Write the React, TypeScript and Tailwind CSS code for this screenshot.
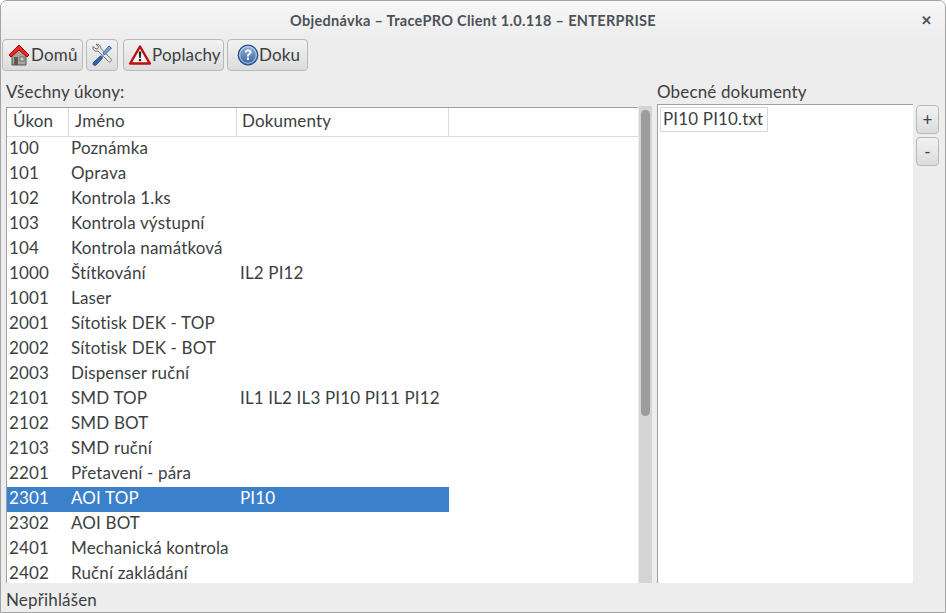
const rows = [
  ["100", "Poznámka", ""],
  ["101", "Oprava", ""],
  ["102", "Kontrola 1.ks", ""],
  ["103", "Kontrola výstupní", ""],
  ["104", "Kontrola namátková", ""],
  ["1000", "Štítkování", "IL2 PI12"],
  ["1001", "Laser", ""],
  ["2001", "Sítotisk DEK - TOP", ""],
  ["2002", "Sítotisk DEK - BOT", ""],
  ["2003", "Dispenser ruční", ""],
  ["2101", "SMD TOP", "IL1 IL2 IL3 PI10 PI11 PI12"],
  ["2102", "SMD BOT", ""],
  ["2103", "SMD ruční", ""],
  ["2201", "Přetavení - pára", ""],
  ["2301", "AOI TOP", "PI10"],
  ["2302", "AOI BOT", ""],
  ["2401", "Mechanická kontrola", ""],
  ["2402", "Ruční zakládání", ""],
];

const toolBtn =
  "h-[32px] flex items-center rounded-[4px] border border-[#b9b9b9] bg-gradient-to-b from-[#f2f2f2] to-[#dcdcdc]";

function HomeIcon() {
  return (
    <svg width="22" height="24" viewBox="0 0 22 24">
      <path d="M4 11v11h14V11L11 5z" fill="#a8a89e" stroke="#55554f" />
      <rect x="12" y="14" width="4" height="4" fill="#c9d3dc" stroke="#555" strokeWidth="0.7" />
      <rect x="6" y="14" width="4" height="8" fill="#5c5c54" />
      <path d="M1 12 11 2l10 10-2 2-8-7-8 7z" fill="#ef2929" stroke="#a40000" strokeLinejoin="round" />
    </svg>
  );
}

function ToolsIcon() {
  return (
    <svg width="24" height="24" viewBox="0 0 24 24">
      <path d="M3 3.500 6 6l2-.5.5-2L6 1.500c2.500-1 5 1 4.500 3.500L21 16c1.500 1.500-1 4-2.500 2.500L8 8C5 9 2 6.500 3 3.500z" fill="#e8e8e6" stroke="#6f716c" strokeWidth="1" strokeLinejoin="round" />
      <path d="m13 10 6-7 2.500 2-7 7z" fill="#7fa3cc" stroke="#3465a4" strokeWidth="1" />
      <path d="M12.500 11.500 10 14l1.500 1.500L14 13z" fill="#888a85" />
      <path d="M10.500 13 4 19c-2 2 0 4.500 2 3l6.500-7z" fill="#3465a4" stroke="#204a87" strokeWidth="1" strokeLinejoin="round" />
    </svg>
  );
}

function AlarmIcon() {
  return (
    <svg width="22" height="20" viewBox="0 0 22 20">
      <path d="M11 1.500 20.800 18.500H1.200z" fill="#f4f4f0" stroke="#b80f0f" strokeWidth="2.400" strokeLinejoin="round" />
      <path d="M9.800 6.500h2.400l-.4 6.500h-1.600z" fill="#222" />
      <rect x="9.900" y="14" width="2.200" height="2.200" fill="#222" />
    </svg>
  );
}

function HelpIcon() {
  return (
    <svg width="22" height="22" viewBox="0 0 22 22">
      <defs>
        <linearGradient id="helpFill" x1="0" y1="0" x2="0" y2="1">
          <stop offset="0" stopColor="#9db9dd" />
          <stop offset="1" stopColor="#2f5f9f" />
        </linearGradient>
      </defs>
      <circle cx="11" cy="11" r="9.800" fill="url(#helpFill)" stroke="#204a87" strokeWidth="1.200" />
      <circle cx="11" cy="11" r="8.300" fill="none" stroke="#d5e1f0" strokeWidth="0.800" />
      <path d="M7.800 8.400C8 6.400 9.400 5.600 11.200 5.600c2 0 3.300 1.100 3.300 2.700 0 2.300-2.600 2.300-2.600 4.300H9.900c0-3 2.400-3 2.400-4.300 0-.7-.5-1-1.200-1-.8 0-1.200.4-1.300 1.100z" fill="#fff" />
      <rect x="9.900" y="13.600" width="2.100" height="2.200" fill="#fff" />
    </svg>
  );
}

export default function App() {
  return (
    <div
      className="w-[946px] h-[613px] overflow-hidden flex flex-col rounded-t-[7px] border border-[#a3a3a3] bg-[#ededed] text-[#3c3f42] text-[17px] tracking-[0.15px]"
      style={{ fontFamily: 'Lato, "Open Sans", sans-serif' }}
    >
      {/* titulek okna */}
      <div className="relative h-[37px] shrink-0 flex items-center bg-gradient-to-b from-[#f7f7f7] to-[#ededed]">
        <div className="flex-1 pt-[2px] text-center text-[14.5px] tracking-[0.3px] font-bold text-[#4c5258]">
          Objednávka – TracePRO Client 1.0.118 – ENTERPRISE
        </div>
        <div className="absolute right-[13px] top-[10px] text-[13px] font-bold text-[#4c5258]">✕</div>
      </div>

      {/* nástrojová lišta */}
      <div className="h-[33px] shrink-0 flex items-center pl-[1px]">
        <div className={`${toolBtn} w-[81px] pl-[5px] gap-[1px]`}>
          <HomeIcon />
          <span>Domů</span>
        </div>
        <div className={`${toolBtn} w-[32px] ml-[3px] justify-center`}>
          <ToolsIcon />
        </div>
        <div className={`${toolBtn} w-[101px] ml-[5px] pl-[5px] gap-[1px]`}>
          <AlarmIcon />
          <span>Poplachy</span>
        </div>
        <div className={`${toolBtn} w-[81px] ml-[3px] pl-[9px]`}>
          <HelpIcon />
          <span>Doku</span>
        </div>
      </div>

      <div className="flex-1 min-h-0 flex pt-[11px]">
        {/* všechny úkony */}
        <div className="w-[651px] shrink-0 flex flex-col pl-[5px]">
          <div className="h-[25px] shrink-0 leading-[20px]">Všechny úkony:</div>
          <div className="flex-1 min-h-0 flex">
            <div className="w-[632px] shrink-0 overflow-hidden bg-white border-t border-l border-[#a0a0a0]">
              <div className="h-[29px] flex items-center border-b border-[#dcdcdc]">
                <div className="w-[62px] h-full flex items-center pl-[6px] pb-[2px] border-r border-[#dcdcdc]">Úkon</div>
                <div className="w-[168px] h-full flex items-center pl-[6px] pb-[2px] border-r border-[#dcdcdc]">Jméno</div>
                <div className="w-[212px] h-full flex items-center pl-[5px] pb-[2px] border-r border-[#dcdcdc]">Dokumenty</div>
              </div>
              {rows.map(([id, name, docs]) => (
                <div
                  key={id}
                  className={`w-[442px] h-[25px] flex items-center pb-[4px] ${id === "2301" ? "bg-[#3a80cb] text-white" : ""}`}
                >
                  <div className="w-[64px] pl-[2px]">{id}</div>
                  <div className="w-[169px]">{name}</div>
                  <div className="whitespace-nowrap">{docs}</div>
                </div>
              ))}
            </div>
            <div className="w-[13px] shrink-0 ml-[1px] -mt-[1px] bg-[#d4d4d4] px-[2px] pt-[4px]">
              <div className="h-[306px] w-[9px] rounded-full bg-[#9c9c9c]"></div>
            </div>
          </div>
        </div>

        {/* obecné dokumenty */}
        <div className="flex-1 flex flex-col pl-[5px]">
          <div className="h-[22px] shrink-0 leading-[20px]">Obecné dokumenty</div>
          <div className="flex-1 min-h-0 flex">
            <div className="w-[256px] shrink-0 bg-white border-t border-l border-[#a0a0a0] pl-[2px] pt-[2px]">
              <div className="w-[108px] h-[25px] flex items-center pl-[2px] pb-[2px] border border-[#d8d8d8]">PI10 PI10.txt</div>
            </div>
            <div className="ml-[3px] pt-[1px] flex flex-col gap-[3px]">
              <div className="w-[23px] h-[29px] flex items-center justify-center rounded-[4px] border border-[#b9b9b9] bg-gradient-to-b from-[#f2f2f2] to-[#dcdcdc]">+</div>
              <div className="w-[23px] h-[29px] flex items-center justify-center rounded-[4px] border border-[#b9b9b9] bg-gradient-to-b from-[#f2f2f2] to-[#dcdcdc]">-</div>
            </div>
          </div>
        </div>
      </div>

      {/* stavový řádek */}
      <div className="h-[29px] shrink-0 flex items-center pl-[5px] pt-[5px]">Nepřihlášen</div>
    </div>
  );
}
